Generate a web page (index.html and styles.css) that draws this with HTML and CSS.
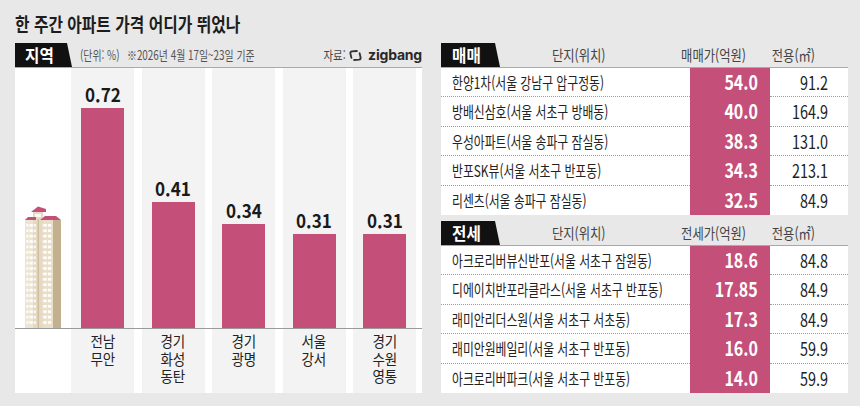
FILE: index.html
```html
<!DOCTYPE html>
<html lang="ko">
<head>
<meta charset="utf-8">
<title>한 주간 아파트 가격 어디가 뛰었나</title>
<link rel="stylesheet" href="styles.css">
</head>
<body>
<div class="page">
  <h1 class="title"><span class="sx t-title">한 주간 아파트 가격 어디가 뛰었나</span></h1>
  <div class="main">
    <section class="left">
      <div class="head">
        <div class="tab ltab"><span class="sx tabtxt">지역</span></div>
        <div class="meta">
          <div class="m1"><span class="sx sl">(단위: %)</span></div>
          <div class="m2"><span class="sx sl">※2026년 4월 17일~23일 기준</span></div>
        </div>
        <div class="src">
          <div class="srclabel"><span class="sx sr">자료:</span></div>
          <svg class="zigicon" viewBox="0 0 16 14" width="15" height="13" aria-hidden="true">
            <path d="M9.5 2.2 L4.2 2.6 Q2.3 2.8 2.5 4.8 L3.6 9.6" fill="none" stroke="#333" stroke-width="2" stroke-linecap="round" stroke-linejoin="round"/>
            <path d="M6.5 11.8 L11.8 11.4 Q13.7 11.2 13.5 9.2 L12.4 4.4" fill="none" stroke="#333" stroke-width="2" stroke-linecap="round" stroke-linejoin="round"/>
          </svg>
          <span class="zig">zigbang</span>
        </div>
      </div>
      <div class="chart">
        <div class="plot">
          <div class="iconcol">
            <svg class="building" viewBox="0 0 36 122" width="36" height="122" aria-hidden="true">
              <defs>
                <pattern id="win" x="0" y="18" width="4.6" height="5.4" patternUnits="userSpaceOnUse">
                  <rect x="0" y="0" width="3.4" height="2.6" fill="#ffffff"/>
                </pattern>
              </defs>
              <rect x="28" y="14" width="8" height="108" fill="#c2b08f"/>
              <rect x="15" y="13" width="13" height="109" fill="#e9dec8"/>
              <rect x="0" y="13" width="12" height="109" fill="#ede4d2"/>
              <rect x="8" y="4" width="10" height="118" fill="#e4d9c2"/>
              <rect x="12.6" y="13" width="1.4" height="109" fill="#cdbd9e"/>
              <rect x="1.4" y="18" width="9.4" height="102" fill="url(#win)"/>
              <rect x="17" y="18" width="9.4" height="102" fill="url(#win)"/>
              <rect x="10" y="8" width="6" height="3" fill="#ffffff" opacity=".8"/>
              <polygon points="6,6 13,0.5 21,3 21,6" fill="#c44f79"/>
              <polygon points="0,14 3,11 11,11 11,14" fill="#c44f79"/>
              <polygon points="15,14 20,10 31,10 36,14" fill="#c44f79"/>
            </svg>
          </div>
          <div class="band"><div class="val"><span class="sx sc">0.72</span></div><div class="bar" style="height:220px"></div></div>
          <div class="band"><div class="val"><span class="sx sc">0.41</span></div><div class="bar" style="height:126px"></div></div>
          <div class="band"><div class="val"><span class="sx sc">0.34</span></div><div class="bar" style="height:104px"></div></div>
          <div class="band"><div class="val"><span class="sx sc">0.31</span></div><div class="bar" style="height:94px"></div></div>
          <div class="band"><div class="val"><span class="sx sc">0.31</span></div><div class="bar" style="height:94px"></div></div>
        </div>
        <div class="labels">
          <div class="iconcol"></div>
          <div class="band lab"><span class="ln">전남</span><span class="ln">무안</span></div>
          <div class="band lab"><span class="ln">경기</span><span class="ln">화성</span><span class="ln">동탄</span></div>
          <div class="band lab"><span class="ln">경기</span><span class="ln">광명</span></div>
          <div class="band lab"><span class="ln">서울</span><span class="ln">강서</span></div>
          <div class="band lab"><span class="ln">경기</span><span class="ln">수원</span><span class="ln">영통</span></div>
        </div>
      </div>
    </section>

    <section class="right">
      <div class="tbl">
        <div class="head thead">
          <div class="tab rtab"><span class="sx tabtxt">매매</span></div>
          <div class="hname"><span class="sx sc">단지(위치)</span></div>
          <div class="hcol"><span class="sx sc">매매가(억원)</span></div>
          <div class="hcol"><span class="sx sc">전용(㎡)</span></div>
        </div>
        <div class="row"><div class="name"><span class="sx sl">한양1차(서울 강남구 압구정동)</span></div><div class="price"><span class="sx sr">54.0</span></div><div class="area"><span class="sx sr">91.2</span></div></div>
        <div class="row"><div class="name"><span class="sx sl">방배신삼호(서울 서초구 방배동)</span></div><div class="price"><span class="sx sr">40.0</span></div><div class="area"><span class="sx sr">164.9</span></div></div>
        <div class="row"><div class="name"><span class="sx sl">우성아파트(서울 송파구 잠실동)</span></div><div class="price"><span class="sx sr">38.3</span></div><div class="area"><span class="sx sr">131.0</span></div></div>
        <div class="row"><div class="name"><span class="sx sl">반포SK뷰(서울 서초구 반포동)</span></div><div class="price"><span class="sx sr">34.3</span></div><div class="area"><span class="sx sr">213.1</span></div></div>
        <div class="row"><div class="name"><span class="sx sl">리센츠(서울 송파구 잠실동)</span></div><div class="price"><span class="sx sr">32.5</span></div><div class="area"><span class="sx sr">84.9</span></div></div>
      </div>
      <div class="tbl">
        <div class="head thead">
          <div class="tab rtab"><span class="sx tabtxt">전세</span></div>
          <div class="hname"><span class="sx sc">단지(위치)</span></div>
          <div class="hcol"><span class="sx sc">전세가(억원)</span></div>
          <div class="hcol"><span class="sx sc">전용(㎡)</span></div>
        </div>
        <div class="row"><div class="name"><span class="sx sl">아크로리버뷰신반포(서울 서초구 잠원동)</span></div><div class="price"><span class="sx sr">18.6</span></div><div class="area"><span class="sx sr">84.8</span></div></div>
        <div class="row"><div class="name"><span class="sx sl">디에이치반포라클라스(서울 서초구 반포동)</span></div><div class="price"><span class="sx sr">17.85</span></div><div class="area"><span class="sx sr">84.9</span></div></div>
        <div class="row"><div class="name"><span class="sx sl">래미안리더스원(서울 서초구 서초동)</span></div><div class="price"><span class="sx sr">17.3</span></div><div class="area"><span class="sx sr">84.9</span></div></div>
        <div class="row"><div class="name"><span class="sx sl">래미안원베일리(서울 서초구 반포동)</span></div><div class="price"><span class="sx sr">16.0</span></div><div class="area"><span class="sx sr">59.9</span></div></div>
        <div class="row"><div class="name"><span class="sx sl">아크로리버파크(서울 서초구 반포동)</span></div><div class="price"><span class="sx sr">14.0</span></div><div class="area"><span class="sx sr">59.9</span></div></div>
      </div>
    </section>
  </div>
</div>
</body>
</html>
```
FILE: styles.css
```css
* { box-sizing: border-box; margin: 0; padding: 0; }
body {
  margin: 0;
  width: 860px;
  height: 406px;
  overflow: hidden;
  background: #e8e8e8;
  font-family: "Noto Sans CJK KR", "Noto Sans", sans-serif;
  color: #222;
}
.page { padding: 12px 0 0 15px; }

.sx { display: inline-block; white-space: nowrap; }
.sl { transform-origin: left center; }
.sr { transform-origin: right center; }
.sc { transform-origin: center center; }

.title {
  font-size: 19px;
  font-weight: 700;
  line-height: 24px;
  height: 24px;
  color: #1d1d1d;
  white-space: nowrap;
}
.t-title { transform: scaleX(.83); transform-origin: left center; }

.main { display: flex; gap: 19px; margin-top: 7px; }

/* headers */
.head {
  height: 25px;
  border-bottom: 1px solid #a9a9a9;
  display: flex;
  align-items: stretch;
}
.tab {
  background: #111;
  color: #fff;
  font-weight: 700;
  font-size: 17px;
  line-height: 24px;
  clip-path: polygon(0 0, calc(100% - 5px) 0, 100% 100%, 0 100%);
  flex: none;
}
.tabtxt { transform: scaleX(.92); transform-origin: left center; }
.ltab { width: 57px; padding-left: 10px; }
.rtab { width: 59px; padding-left: 11px; }

/* left panel */
.left { width: 407px; flex: none; }
.meta { display: flex; align-items: center; font-size: 13px; color: #555; line-height: 24px; }
.meta .sx { transform: scaleX(.76); }
.m1 { width: 47px; margin-left: 8px; }
.m2 { width: 140px; }
.src {
  margin-left: auto;
  display: flex;
  align-items: center;
  font-size: 13px;
  color: #444;
  line-height: 24px;
}
.srclabel { width: 24px; text-align: right; }
.srclabel .sx { transform: scaleX(.8); }
.zigicon { margin: 0 5px 0 6px; }
.zig {
  font-family: "Inter", "Liberation Sans", sans-serif;
  font-weight: 700;
  font-size: 14px;
  color: #2a2a2a;
  letter-spacing: -0.2px;
}

.chart { height: 325px; background: #fff; }
.plot {
  height: 261px;
  border-bottom: 1px solid #9a9a9a;
  display: flex;
  gap: 7.5px;
  padding-right: 6px;
}
.labels {
  height: 64px;
  display: flex;
  gap: 7.5px;
  padding-right: 6px;
}
.iconcol {
  width: 48.5px;
  flex: none;
  display: flex;
  align-items: flex-end;
  padding-left: 10px;
}
.building { display: block; }
.band {
  width: 63px;
  flex: none;
  background: #f3f3f3;
  display: flex;
  flex-direction: column;
  justify-content: flex-end;
  align-items: center;
}
.val {
  font-size: 19px;
  font-weight: 700;
  line-height: 20px;
  margin-bottom: 4px;
  color: #1a1a1a;
}
.val .sx { transform: scaleX(.9); }
.bar { width: 43px; background: #c44f79; }
.lab {
  justify-content: flex-start;
  padding-top: 3px;
  font-size: 15px;
  color: #222;
}
.ln {
  display: block;
  height: 17.5px;
  line-height: 17.5px;
  overflow: visible;
  white-space: nowrap;
  transform: scaleX(.9);
}

/* right panel */
.right { width: 407px; flex: none; display: flex; flex-direction: column; gap: 6px; }
.thead { font-size: 15px; color: #444; line-height: 24px; }
.hname { width: 174px; text-align: center; padding-right: 16px; }
.hcol { width: 80px; text-align: center; }
.hcol:last-child { width: 78px; }
.thead .hname .sx, .thead .hcol .sx { transform: scaleX(.82); }

.row {
  display: grid;
  grid-template-columns: 249px 80px 78px;
  height: 29.4px;
}
.row > div { height: 29.4px; line-height: 28.4px; white-space: nowrap; }
.name {
  background: #fff;
  padding-left: 11px;
  border-bottom: 1px dotted #9c9c9c;
  font-size: 16px;
  color: #222;
  overflow: visible;
}
.name .sx { transform: scaleX(.74); }
.price {
  background: #c44f79;
  color: #fff;
  font-weight: 700;
  font-size: 20px;
  text-align: right;
  padding-right: 12px;
  border-bottom: 1px solid #c44f79;
}
.price .sx { transform: scaleX(.8); }
.area {
  background: #fff;
  font-size: 18px;
  text-align: right;
  padding-right: 20px;
  border-bottom: 1px dotted #9c9c9c;
  color: #222;
}
.area .sx { transform: scaleX(.8); }
.row:last-child .name, .row:last-child .area { border-bottom-color: transparent; }
```
